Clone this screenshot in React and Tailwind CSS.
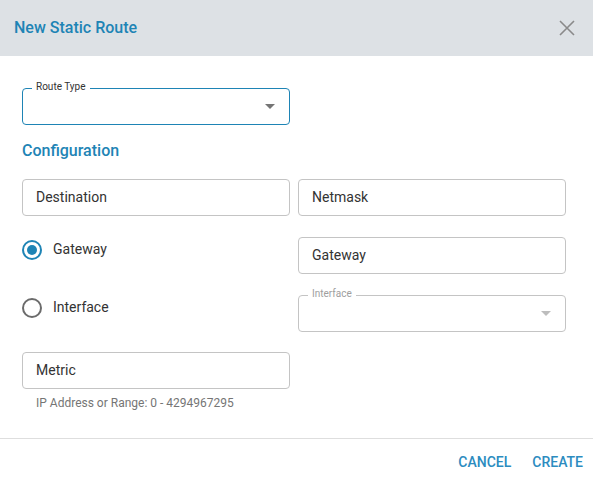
import React from "react";

const font = { fontFamily: "Roboto, 'Noto Sans', sans-serif" };

function Caret({ light }) {
  return (
    <svg width="10" height="5" viewBox="0 0 10 5" className="shrink-0">
      <path d="M0 0 L10 0 L5 5 Z" fill={light ? "#bdbdbd" : "#757575"} />
    </svg>
  );
}

function TextBox({ label }) {
  return (
    <div className="h-[37px] rounded-[4px] border border-[#c4c4c4] flex items-center px-[13px] text-[14px] text-[#333]">
      {label}
    </div>
  );
}

function Radio({ checked, label }) {
  return (
    <div className="flex items-center gap-[11px] h-[37px]">
      <div
        className={
          "w-[20px] h-[20px] rounded-full border-2 flex items-center justify-center " +
          (checked ? "border-[#1e84b5]" : "border-[#6b6b6b]")
        }
      >
        {checked && <div className="w-[10px] h-[10px] rounded-full bg-[#1e84b5]" />}
      </div>
      <span className="text-[14px] text-[#333]">{label}</span>
    </div>
  );
}

export default function App() {
  return (
    <div style={font} className="w-[593px] h-[486px] bg-white flex flex-col">
      <div className="h-[56px] bg-[#dde1e5] flex items-center justify-between pl-[14px] pr-[18px] shrink-0">
        <span className="text-[16px] font-medium text-[#1e84b5]">New Static Route</span>
        <svg width="16" height="16" viewBox="0 0 16 16">
          <path d="M1 1 L15 15 M15 1 L1 15" stroke="#8a8a8a" strokeWidth="1.6" />
        </svg>
      </div>
      <div className="flex-1 px-[22px] pt-[32px]">
        <div className="w-[268px] relative">
          <div className="h-[37px] rounded-[4px] border border-[#1e84b5] flex items-center justify-end pr-[14px]">
            <Caret />
          </div>
          <span className="absolute left-[10px] top-[-7px] bg-white px-[4px] text-[10px] leading-[12px] text-[#333]">
            Route Type
          </span>
        </div>
        <div className="mt-[16px] text-[16px] font-medium text-[#1e84b5] leading-[20px]">Configuration</div>
        <div className="mt-[18px] grid grid-cols-[268px_268px] gap-x-[8px]">
          <TextBox label="Destination" />
          <TextBox label="Netmask" />
        </div>
        <div className="mt-[21px] grid grid-cols-[268px_268px] gap-x-[8px] gap-y-[21px]">
          <div className="-mt-[6px]"><Radio checked label="Gateway" /></div>
          <TextBox label="Gateway" />
          <div className="-mt-[6px]"><Radio label="Interface" /></div>
          <div className="relative">
            <div className="h-[37px] rounded-[4px] border border-[#c4c4c4] flex items-center justify-end pr-[14px]">
              <Caret light />
            </div>
            <span className="absolute left-[10px] top-[-7px] bg-white px-[4px] text-[10px] leading-[12px] text-[#9e9e9e]">
              Interface
            </span>
          </div>
        </div>
        <div className="mt-[20px] w-[268px]">
          <TextBox label="Metric" />
          <div className="mt-[5px] pl-[14px] text-[12px] text-[#757575]">IP Address or Range: 0 - 4294967295</div>
        </div>
      </div>
      <div className="h-[48px] border-t border-[#dedede] flex items-center justify-end gap-[21px] pr-[10px] shrink-0">
        <button className="text-[14px] font-medium text-[#2c8cbf]">CANCEL</button>
        <button className="text-[14px] font-medium text-[#2c8cbf]">CREATE</button>
      </div>
    </div>
  );
}
